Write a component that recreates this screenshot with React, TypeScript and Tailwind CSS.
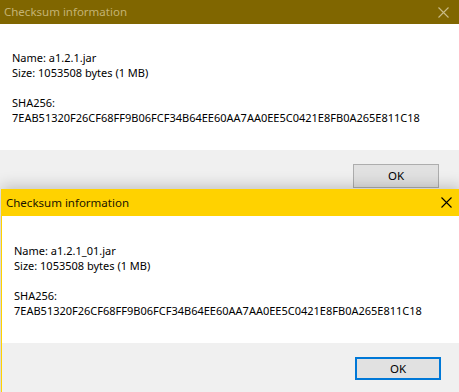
const HASH = "7EAB51320F26CF68FF9B06FCF34B64EE60AA7AA0EE5C0421E8FB0A265E811C18"

const CloseIcon = ({ color }: { color: string }) => (
  <svg width="11" height="11" viewBox="0 0 11 11" className="block">
    <path d="M0.5 0.5 L10.5 10.5 M10.5 0.5 L0.5 10.5" stroke={color} strokeWidth="1.1" fill="none" />
  </svg>
)

const Info = ({ name }: { name: string }) => (
  <div className="text-[11px] leading-[15px] text-black">
    <p>Name: {name}</p>
    <p>Size: 1053508 bytes (1 MB)</p>
    <p>&nbsp;</p>
    <p>SHA256:</p>
    <p className="whitespace-nowrap">{HASH}</p>
  </div>
)

const App = () => {
  return (
    <div
      className="relative w-[459px] h-[392px] overflow-hidden bg-[#f0f0f0]"
      style={{ fontFamily: '"Noto Sans", "Open Sans", sans-serif' }}
    >
      {/* inactive window */}
      <div className="absolute left-0 top-0 w-[459px] h-[200px] flex flex-col">
        <div className="h-[24px] bg-[#806600] flex items-center justify-between pl-[4px] pr-[10px]">
          <span className="text-[11.5px] text-[#c4b373]">Checksum information</span>
          <CloseIcon color="#c9bb86" />
        </div>
        <div className="h-[126px] bg-white pl-[12px] pt-[26px]">
          <Info name="a1.2.1.jar" />
        </div>
        <div className="flex-1 bg-[#f0f0f0] flex justify-end pr-[20px] pt-[14px]">
          <button className="w-[86px] h-[24px] bg-[#e1e1e1] border border-[#adadad] text-[11.5px] text-black">
            OK
          </button>
        </div>
      </div>

      {/* active window */}
      <div className="absolute left-[1px] top-[189px] w-[461px] h-[220px] flex flex-col border-l border-[#ffd200] shadow-[0_-3px_14px_rgba(0,0,0,0.2)]">
        <div className="h-[27px] bg-[#ffd200] flex items-center justify-between pl-[4px] pr-[10px]">
          <span className="text-[11.5px] text-[#1a1400]">Checksum information</span>
          <CloseIcon color="#000000" />
        </div>
        <div className="h-[127px] bg-white pl-[12px] pt-[27px]">
          <Info name="a1.2.1_01.jar" />
        </div>
        <div className="flex-1 bg-[#f0f0f0] flex justify-end pr-[21px] pt-[14px]">
          <button className="w-[86px] h-[23px] bg-[#e1e1e1] border-2 border-[#0078d7] text-[11.5px] text-black">
            OK
          </button>
        </div>
      </div>
    </div>
  )
}

export default App
